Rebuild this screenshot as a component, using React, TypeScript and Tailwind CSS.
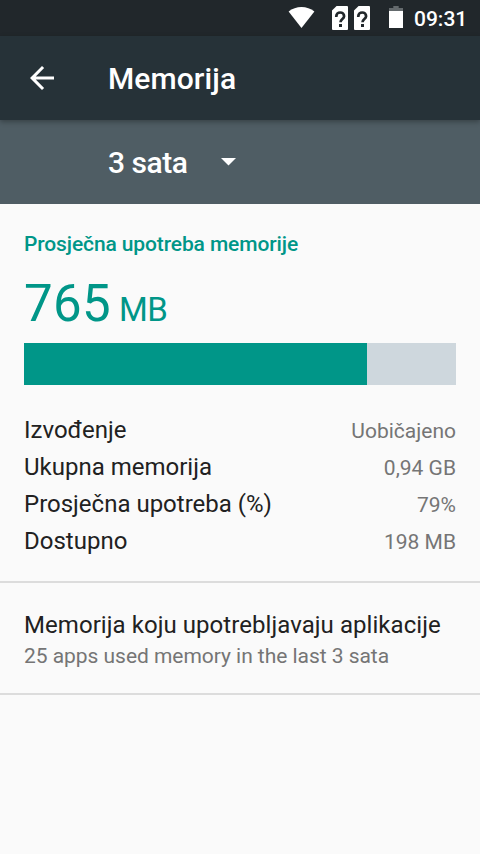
import type { ReactNode } from "react";

interface MemoryStat {
  label: string;
  value: string;
}

const stats: MemoryStat[] = [
  { label: "Izvođenje", value: "Uobičajeno" },
  { label: "Ukupna memorija", value: "0,94 GB" },
  { label: "Prosječna upotreba (%)", value: "79%" },
  { label: "Dostupno", value: "198 MB" },
];

const usedRatio = 343 / 432;

function WifiIcon() {
  return (
    <svg width="28" height="24" viewBox="0 0 28 24" fill="#fff">
      <path d="M14.5 21.9 L1.6 5.6 C8.7 -0.6 20.3 -0.6 27.4 5.6 Z" />
    </svg>
  );
}

function SimUnknownIcon() {
  return (
    <svg width="16" height="24" viewBox="0 0 16 24">
      <path d="M4.6 0H15a1 1 0 0 1 1 1v22a1 1 0 0 1-1 1H1a1 1 0 0 1-1-1V4.6Z" fill="#fff" />
      <path d="M4.3 10.9v-.7a3.9 3.7 0 0 1 7.8 0c0 2.8-3.6 2.8-3.6 6" fill="none" stroke="#21272b" strokeWidth="2.7" />
      <path d="M7 18h3v3H7z" fill="#21272b" />
    </svg>
  );
}

function BatteryIcon() {
  return (
    <svg width="14" height="22" viewBox="0 0 14 22">
      <path d="M4.3 0h5.4v2H14v3H0V2h4.3Z" fill="#646a6d" />
      <path d="M0 5h14v17H0z" fill="#fff" />
    </svg>
  );
}

function StatusBar() {
  return (
    <div className="flex h-9 items-center bg-[#21272b] pl-[287px] text-white">
      <WifiIcon />
      <div className="ml-[17px] flex gap-1.5">
        <SimUnknownIcon />
        <SimUnknownIcon />
      </div>
      <div className="ml-[19px] pb-0.5">
        <BatteryIcon />
      </div>
      <span className="ml-[11px] pt-px text-[21px] leading-9 font-medium">09:31</span>
    </div>
  );
}

function AppBar({ title }: { title: string }) {
  return (
    <header className="relative flex h-[84px] items-center bg-[#263238] pl-6 text-white shadow-[0_2px_5px_rgba(0,0,0,0.3)]">
      <button type="button" aria-label="Natrag" className="h-9 w-9">
        <svg width="36" height="36" viewBox="0 0 24 24" fill="#fff">
          <path d="M20 11H7.83l5.59-5.59L12 4l-8 8 8 8 1.41-1.41L7.83 13H20v-2z" />
        </svg>
      </button>
      <h1 className="ml-12 pt-0.5 text-[30px] leading-9 font-medium tracking-[0.1px]">{title}</h1>
    </header>
  );
}

function Section({ children }: { children: ReactNode }) {
  return <section className="border-b-2 border-[#dcdcdc] px-6">{children}</section>;
}

export default function App() {
  return (
    <div className="min-h-screen bg-[#fafafa] font-[Roboto,sans-serif] text-[#212121]">
      <StatusBar />
      <AppBar title="Memorija" />
      <button type="button" className="flex h-[84px] w-full items-center bg-[#4f5d64] pl-[108px] text-white">
        <span className="pt-0.5 text-[30px] leading-9 font-medium tracking-[-0.45px]">3 sata</span>
        <svg className="ml-[33px]" width="15" height="8" viewBox="0 0 15 8" fill="#fff">
          <path d="M0 0h15L7.5 7.5z" />
        </svg>
      </button>

      <main>
        <Section>
          <h2 className="pt-7 text-[21px] leading-[25px] font-medium tracking-[-0.12px] text-[#009688]">
            Prosječna upotreba memorije
          </h2>
          <div className="mt-[17px] flex h-[60px] items-baseline text-[51px] leading-[60px] tracking-[0.3px] text-[#009688]">
            765<span className="ml-2 text-[33px] tracking-[-0.4px]">MB</span>
          </div>
          <div className="mt-[9px] h-[42px] bg-[#ced7dd]">
            <div className="h-full bg-[#009688]" style={{ width: `${usedRatio * 100}%` }} />
          </div>
          <dl className="pt-[27px] pb-[21px]">
            {stats.map((stat) => (
              <div key={stat.label} className="flex h-[37px] items-baseline justify-between">
                <dt className="text-[24px] leading-9">{stat.label}</dt>
                <dd className="text-[21px] leading-9 text-[#757575]">{stat.value}</dd>
              </div>
            ))}
          </dl>
        </Section>

        <Section>
          <div className="pt-[27px] pb-[23px]">
            <div className="text-[24px] leading-[30px] tracking-[0.06px]">Memorija koju upotrebljavaju aplikacije</div>
            <div className="mt-[3px] text-[21px] leading-[27px] tracking-[-0.04px] text-[#757575]">
              25 apps used memory in the last 3 sata
            </div>
          </div>
        </Section>
      </main>
    </div>
  );
}
